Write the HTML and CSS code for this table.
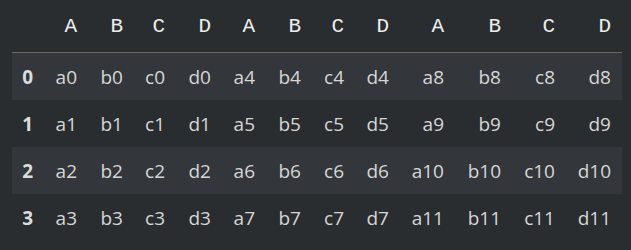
FILE: index.html
```html
<!DOCTYPE html>
<html>
<head>
<meta charset="utf-8">
<link rel="stylesheet" href="styles.css">
</head>
<body>
<table class="df">
  <colgroup>
    <col class="w-idx">
    <col class="w-a"><col class="w-b"><col class="w-c"><col class="w-d">
    <col class="w-a"><col class="w-b"><col class="w-c2"><col class="w-d2">
    <col class="w-a3"><col class="w-b3"><col class="w-c3"><col class="w-d3">
  </colgroup>
  <thead>
    <tr>
      <th class="blank"></th>
      <th>A</th><th>B</th><th>C</th><th>D</th>
      <th>A</th><th>B</th><th>C</th><th>D</th>
      <th>A</th><th>B</th><th>C</th><th>D</th>
    </tr>
  </thead>
  <tbody>
    <tr class="odd">
      <th class="idx">0</th>
      <td>a0</td><td>b0</td><td>c0</td><td>d0</td>
      <td>a4</td><td>b4</td><td>c4</td><td>d4</td>
      <td>a8</td><td>b8</td><td>c8</td><td>d8</td>
    </tr>
    <tr>
      <th class="idx">1</th>
      <td>a1</td><td>b1</td><td>c1</td><td>d1</td>
      <td>a5</td><td>b5</td><td>c5</td><td>d5</td>
      <td>a9</td><td>b9</td><td>c9</td><td>d9</td>
    </tr>
    <tr class="odd">
      <th class="idx">2</th>
      <td>a2</td><td>b2</td><td>c2</td><td>d2</td>
      <td>a6</td><td>b6</td><td>c6</td><td>d6</td>
      <td>a10</td><td>b10</td><td>c10</td><td>d10</td>
    </tr>
    <tr>
      <th class="idx">3</th>
      <td>a3</td><td>b3</td><td>c3</td><td>d3</td>
      <td>a7</td><td>b7</td><td>c7</td><td>d7</td>
      <td>a11</td><td>b11</td><td>c11</td><td>d11</td>
    </tr>
  </tbody>
</table>
</body>
</html>
```
FILE: styles.css
```css
html, body {
  margin: 0;
  padding: 0;
  background: #2a2d30;
}
body {
  padding: 0 0 0 12px;
}
.df {
  border-collapse: collapse;
  border-spacing: 0;
  table-layout: fixed;
  width: 608px;
  font-family: "Open Sans", "Noto Sans", sans-serif;
  font-size: 19px;
  color: #d6d6d6;
}
.w-idx { width: 32px; }
.w-a { width: 44px; }
.w-b { width: 46px; }
.w-c { width: 42px; }
.w-d { width: 46px; }
.w-c2 { width: 43px; }
.w-d2 { width: 45px; }
.w-a3 { width: 55px; }
.w-b3 { width: 57px; }
.w-c3 { width: 54px; }
.w-d3 { width: 56px; }
.df thead th {
  font-family: "Liberation Mono", "Courier New", monospace;
  font-weight: normal;
  font-size: 21px;
  color: #ececec;
  height: 52px;
  padding: 0 11px 0 0;
  text-align: right;
  vertical-align: middle;
  border-bottom: 1px solid #70675e;
}
.df td, .df .idx {
  height: 47px;
  padding: 0 11px 0 0;
  text-align: right;
  vertical-align: middle;
  white-space: nowrap;
}
.df .idx {
  font-weight: bold;
  color: #dcdcdc;
}
.df tr.odd {
  background: #33363a;
}
```
